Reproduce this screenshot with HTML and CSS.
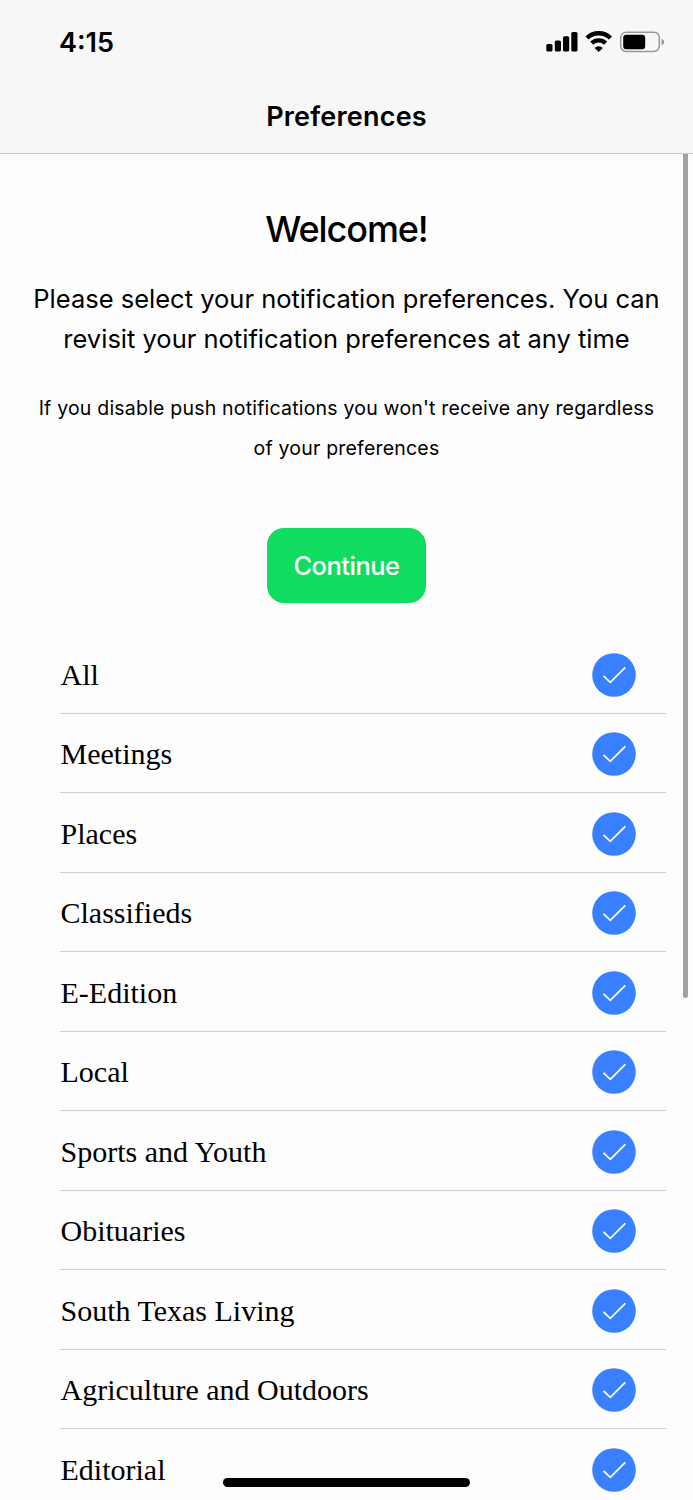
FILE: index.html
```html
<!DOCTYPE html>
<html lang="en">
<head>
<meta charset="utf-8">
<title>Preferences</title>
<link rel="stylesheet" href="styles.css">
</head>
<body>
<svg class="defs" aria-hidden="true">
  <symbol id="check" viewBox="0 0 44 44"><circle cx="22" cy="22" r="21.8" fill="#3880ff"/><path d="M11.5 22.8 18.3 29.3 33.3 14.4" fill="none" stroke="#fff" stroke-width="1.8"/></symbol>
</svg>
<div class="screen">
  <header class="header">
    <div class="status">
      <span class="time">4:15</span>
      <svg class="indicators" width="120" height="24" viewBox="0 0 120 24">
        <g>
          <rect x="1.3" y="14" width="6.2" height="7.6" rx="1.6"/>
          <rect x="9.8" y="10.6" width="6.2" height="11" rx="1.6"/>
          <rect x="18" y="6.2" width="6.2" height="15.4" rx="1.6"/>
          <rect x="26.3" y="2" width="6.2" height="19.6" rx="1.6"/>
        </g>
        <g fill="none" stroke="#000" stroke-width="4.4">
          <path d="M42 8a16.8 16.8 0 0 1 23.4 0"/>
          <path d="M46.7 13.2a10.2 10.2 0 0 1 14 0"/>
        </g>
        <path d="M53.7 21.9 49.6 17.9a5.8 5.8 0 0 1 8.2 0Z"/>
        <rect x="75.7" y="2.2" width="38.6" height="19.3" rx="5.5" fill="none" stroke="#999" stroke-width="1.5"/>
        <rect x="78.2" y="4.8" width="22" height="14.4" rx="3"/>
        <path d="M116.6 8.8q2.6 1.3 2.6 3.3t-2.6 3.3z" fill="#8f8f8f"/>
      </svg>
    </div>
    <h1 class="title">Preferences</h1>
  </header>
  <main class="content">
    <h2 class="welcome">Welcome!</h2>
    <p class="intro">Please select your notification preferences. You can<br>revisit your notification preferences at any time</p>
    <p class="note">If you disable push notifications you won't receive any regardless<br>of your preferences</p>
    <button class="continue">Continue</button>
    <ul class="list">
      <li class="row"><span>All</span><svg class="check"><use href="#check"/></svg></li>
      <li class="row"><span>Meetings</span><svg class="check"><use href="#check"/></svg></li>
      <li class="row"><span>Places</span><svg class="check"><use href="#check"/></svg></li>
      <li class="row"><span>Classifieds</span><svg class="check"><use href="#check"/></svg></li>
      <li class="row"><span>E-Edition</span><svg class="check"><use href="#check"/></svg></li>
      <li class="row"><span>Local</span><svg class="check"><use href="#check"/></svg></li>
      <li class="row"><span>Sports and Youth</span><svg class="check"><use href="#check"/></svg></li>
      <li class="row"><span>Obituaries</span><svg class="check"><use href="#check"/></svg></li>
      <li class="row"><span>South Texas Living</span><svg class="check"><use href="#check"/></svg></li>
      <li class="row"><span>Agriculture and Outdoors</span><svg class="check"><use href="#check"/></svg></li>
      <li class="row"><span>Editorial</span><svg class="check"><use href="#check"/></svg></li>
    </ul>
  </main>
  <div class="scrollbar"></div>
  <div class="home-bar"></div>
</div>
</body>
</html>
```
FILE: styles.css
```css
* { box-sizing: border-box; margin: 0; padding: 0; }
body { background: #fdfdfd; color: #000; font-family: Inter, "Liberation Sans", sans-serif; }
.defs { display: none; }
.screen { position: relative; width: 693px; height: 1500px; overflow: hidden; }
.header { height: 154px; background: #f7f7f7; border-bottom: 1px solid #c8c8c8; }
.status { display: flex; justify-content: space-between; align-items: center; height: 84px; padding: 0 28px 0 59px; }
.time { font-size: 27px; font-weight: 600; letter-spacing: 0; }
.indicators { display: block; }
.title { font-size: 27px; line-height: 34px; font-weight: 600; letter-spacing: 0.2px; text-align: center; padding-top: 16px; }
.content { display: flex; flex-direction: column; align-items: center; text-align: center; }
.welcome { margin-top: 52px; font-size: 36px; line-height: 46px; font-weight: 500; letter-spacing: -1.1px; }
.intro { margin-top: 27px; font-size: 25.5px; line-height: 40px; white-space: nowrap; }
.note { margin-top: 29px; font-size: 19.5px; line-height: 40px; letter-spacing: 0.2px; white-space: nowrap; }
.continue { width: 159px; height: 75px; margin-top: 59.5px; border: 0; border-radius: 17px; background: #10dc60; color: #fff; font: 500 25.5px Inter, sans-serif; letter-spacing: -0.5px; padding-top: 1px; }
.list { align-self: stretch; margin: 31.5px 27px 0 60px; list-style: none; font-family: "Liberation Serif", serif; font-size: 30px; }
.row { display: flex; justify-content: space-between; align-items: center; height: 79.5px; padding: 3px 30px 0 0.5px; border-bottom: 1px solid #cfcfcf; text-align: left; }
.check { display: block; width: 44px; height: 44px; }
.scrollbar { position: absolute; top: 154px; left: 682.5px; width: 5px; height: 844px; border-radius: 0 0 3px 3px; background: #a2a2a2; }
.home-bar { position: absolute; top: 1478px; left: 223px; width: 247px; height: 9px; border-radius: 5px; background: #000; }
```
